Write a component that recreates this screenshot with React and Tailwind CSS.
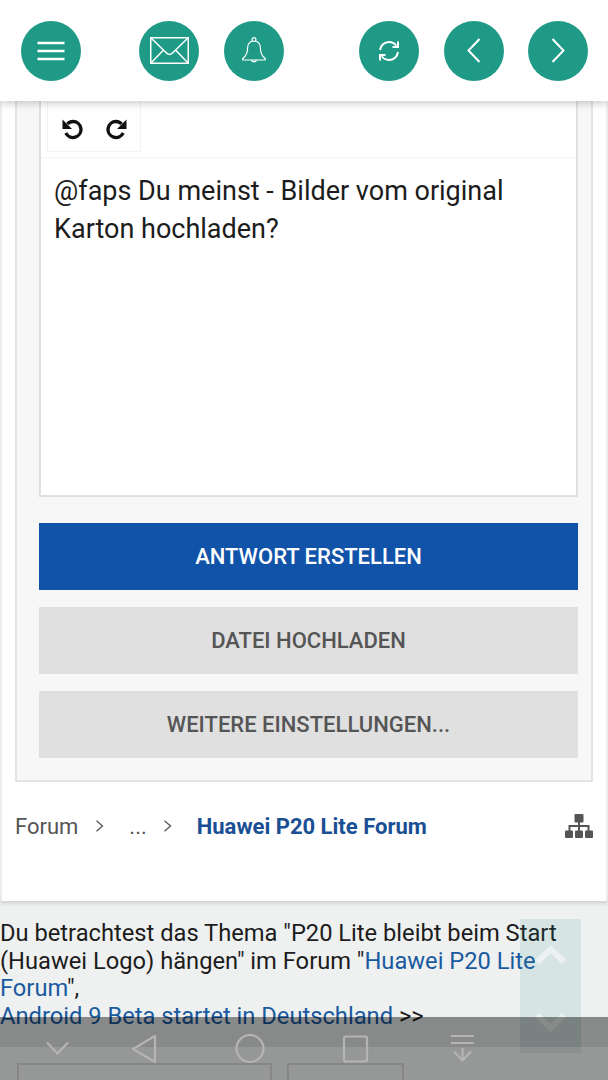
import React from 'react';

function RoundButton({ className = '', children }) {
  return (
    <div className={`w-[60px] h-[60px] rounded-full bg-[#1f9a87] flex items-center justify-center shrink-0 ${className}`}>
      {children}
    </div>
  );
}

function Chevron() {
  return (
    <svg width="9" height="12" viewBox="0 0 9 12" fill="none" stroke="#555" strokeWidth="1.3" className="block">
      <path d="M1.500 0.800 7.500 6l-6 5.200" />
    </svg>
  );
}

function Button({ primary, children }) {
  return (
    <div className={`h-[67px] flex items-center justify-center text-[22px] font-medium ${primary ? 'bg-[#1153a9] text-white' : 'bg-[#e0e0e0] text-[#555555]'}`}>
      {children}
    </div>
  );
}

export default function App() {
  return (
    <div className="relative w-[608px] h-[1080px] overflow-hidden bg-[#eff1f1] font-['Roboto',sans-serif]">
      {/* Top bar */}
      <div className="relative z-10 h-[101px] bg-white shadow-[0_2px_8px_rgba(0,0,0,0.22)] flex items-center pl-[21px]">
        <RoundButton>
          <svg width="28" height="20" viewBox="0 0 28 20" stroke="white" strokeWidth="2.6">
            <path d="M0.500 2h27M0.500 10h27M0.500 18h27" />
          </svg>
        </RoundButton>
        <RoundButton className="ml-[58px]">
          <svg width="39" height="27" viewBox="0 0 39 27" fill="none" stroke="white" strokeWidth="1.5">
            <rect x="0.750" y="0.750" width="37.500" height="25.500" />
            <path d="M1 1l15.500 15c1.700 1.600 4.300 1.600 6 0L38 1M1 26l12.500-13M38 26L25.500 13" />
          </svg>
        </RoundButton>
        <RoundButton className="ml-[25px]">
          <svg width="24" height="28" viewBox="0 0 24 28" fill="none" stroke="white" strokeWidth="1.2">
            <circle cx="12" cy="2.600" r="1.900" />
            <path d="M10.500 4C7 5 5.600 7.800 5.600 11c0 5-1.600 8-4.600 10.300-.9.800-.3 1.700.8 1.700h20.400c1.100 0 1.700-.9.800-1.700C20 19 18.400 16 18.400 11c0-3.200-1.400-6-4.900-7" />
            <path d="M9.500 23a2.600 2.600 0 0 0 5 0" />
          </svg>
        </RoundButton>
        <RoundButton className="ml-[75px]">
          <svg width="24" height="24" viewBox="0 0 24 24" fill="none" stroke="white" strokeWidth="2">
            <path d="M3 11C3.600 6.400 7.400 3 12 3c3 0 5.600 1.400 7.200 3.700" />
            <path d="M21 13c-.6 4.600-4.400 8-9 8-3 0-5.600-1.400-7.200-3.700" />
            <path d="M21 2.500v5.500h-5.500M3 21.500V16h5.500" />
          </svg>
        </RoundButton>
        <RoundButton className="ml-[25px]">
          <svg width="14" height="25" viewBox="0 0 14 25" fill="none" stroke="white" strokeWidth="2">
            <path d="M12.500 1 1.500 12.500 12.500 24" />
          </svg>
        </RoundButton>
        <RoundButton className="ml-[24px]">
          <svg width="14" height="25" viewBox="0 0 14 25" fill="none" stroke="white" strokeWidth="2">
            <path d="M1.500 1l11 11.500L1.500 24" />
          </svg>
        </RoundButton>
      </div>

      {/* Main card */}
      <div className="h-[800px] bg-white border-x-2 border-[#ececec] shadow-[0_2px_4px_rgba(0,0,0,0.15)]">
        <div className="mx-[13px] h-[681px] bg-[#f7f7f7] border-x-2 border-b-2 border-[#e3e3e3] pl-[22px] pr-[13px]">
          <div className="h-[396px] bg-white border-x-2 border-b-2 border-[#e0e0e0]">
            <div className="h-[57px] border-b border-[#f5f5f5]">
              <div className="ml-[6px] w-[94px] h-[51px] border-x border-b border-[#f3f3f3] flex items-center pl-[14px] pt-[6px] gap-[23px]">
                <svg width="21" height="21" viewBox="0 0 21 21" fill="none" stroke="#111" strokeWidth="3.400">
                  <path d="M5.500 5C7 3.300 8.800 2.500 11 2.500a8 8 0 1 1-7.200 11.600" />
                  <path d="M0.500 0.500v9.500h9.500z" fill="#111" stroke="none" />
                </svg>
                <svg width="21" height="21" viewBox="0 0 21 21" fill="none" stroke="#111" strokeWidth="3.400">
                  <path d="M15.500 5C14 3.300 12.200 2.500 10 2.500a8 8 0 1 0 7.200 11.600" />
                  <path d="M20.500 0.500v9.500H11z" fill="#111" stroke="none" />
                </svg>
              </div>
            </div>
            <div className="pl-[13px] pt-[15px] text-[27px] leading-[37.500px] text-[#1c1c1c]">
              @faps Du meinst - Bilder vom original<br />Karton hochladen?
            </div>
          </div>
          <div className="mt-[26px] flex flex-col gap-[17px]">
            <Button primary>ANTWORT ERSTELLEN</Button>
            <Button>DATEI HOCHLADEN</Button>
            <Button>WEITERE EINSTELLUNGEN...</Button>
          </div>
        </div>

        {/* Breadcrumb */}
        <div className="mt-[30px] pl-[13px] pr-[13px] h-[28px] flex items-center text-[22px] text-[#555555]">
          <span>Forum</span>
          <span className="ml-[17px]"><Chevron /></span>
          <span className="ml-[25px]">...</span>
          <span className="ml-[16px]"><Chevron /></span>
          <span className="ml-[25px] font-bold text-[#1a4f94]">Huawei P20 Lite Forum</span>
          <svg className="ml-auto" width="28" height="24" viewBox="0 0 28 24" fill="#555">
            <rect x="9.500" y="0" width="9" height="8.500" rx="1" />
            <rect x="0" y="16.500" width="8" height="7.500" rx="1" />
            <rect x="10" y="16.500" width="8" height="7.500" rx="1" />
            <rect x="20" y="16.500" width="8" height="7.500" rx="1" />
            <path d="M13 8h2v3h9.500v6h-2v-4H15v4h-2v-4H5.500v4h-2v-6H13z" />
          </svg>
        </div>
      </div>

      {/* Thread info */}
      <div className="mt-[19px] text-[23.7px] leading-[27.5px] text-[#1c1c1c]">
        Du betrachtest das Thema "P20 Lite bleibt beim Start<br />
        (Huawei Logo) hängen" im Forum "<span className="text-[#1a5aa0]">Huawei P20 Lite<br />Forum</span>",<br />
        <span className="text-[#1a5aa0]">Android 9 Beta startet in Deutschland</span> &gt;&gt;
      </div>
      <div className="mt-[33px] ml-[17px] flex gap-[15px]">
        <div className="w-[255px] h-[60px] border-2 border-[#d0d0d0]" />
        <div className="w-[117px] h-[60px] border-2 border-[#d0d0d0]" />
      </div>

      {/* Scroll widget */}
      <div className="absolute left-[520px] top-[919px] w-[61px] h-[134px] bg-[#1f8a87]/[0.12] flex flex-col items-center pt-[26px]">
        <svg width="31" height="19" viewBox="0 0 31 19" fill="none" stroke="white" strokeOpacity="0.5" strokeWidth="6">
          <path d="M2 17 15.500 4 29 17" />
        </svg>
        <svg className="mt-[49px]" width="31" height="19" viewBox="0 0 31 19" fill="none" stroke="white" strokeOpacity="0.5" strokeWidth="6">
          <path d="M2 2l13.500 13L29 2" />
        </svg>
      </div>

      {/* Android nav overlay */}
      <div className="absolute left-0 right-0 top-[1017px] bottom-0 bg-black/[0.43]" />
      <div className="absolute left-0 right-0 top-[1047px] bottom-0 bg-white/[0.12]" />
      <div className="absolute left-0 top-[1030px] w-[608px]">
        <svg width="608" height="40" viewBox="0 0 608 40" fill="none" stroke="#b4b4b4" strokeWidth="2.200">
          <path d="M47 12.500l10.500 11L68 12.500" />
          <path d="M155 6 133 19l22 13z" strokeLinejoin="round" />
          <ellipse cx="250" cy="18.500" rx="13.500" ry="13.500" />
          <rect x="344" y="6.500" width="23" height="25" rx="2" />
          <path d="M451 6h23M451 13h23M462.500 18v12.500M454 21.500l8.500 9 8.500-9" />
        </svg>
      </div>
    </div>
  );
}
